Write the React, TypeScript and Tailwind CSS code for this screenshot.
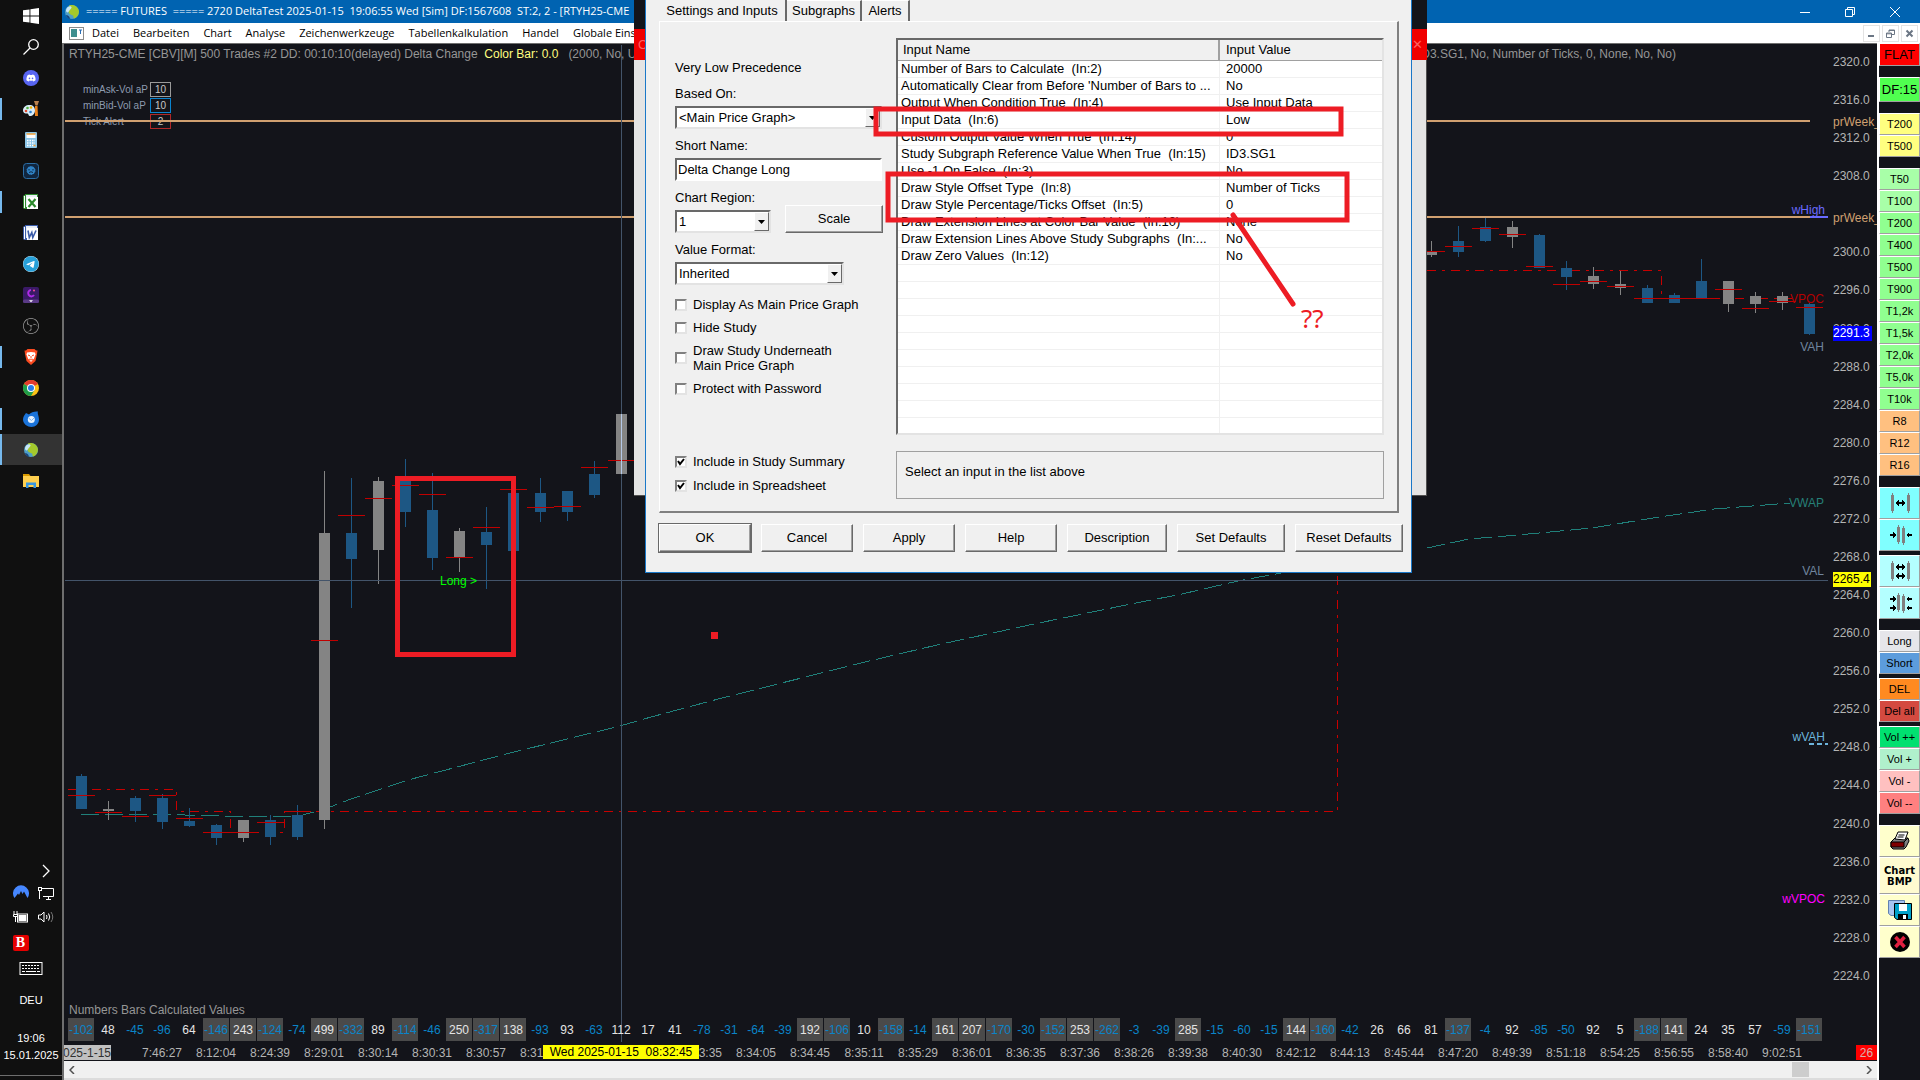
import type { ReactNode } from "react";
import { FaDiscord, FaTelegram } from "react-icons/fa6";
import { SiObsstudio } from "react-icons/si";

const BAR_STEP = 27;
const FIRST_BAR = 81;

type Candle = { i: number; up?: boolean; top: number; bottom: number; high: number; low: number; dash: number };

const CANDLES: Candle[] = [
  { i: 0, top: 776, bottom: 809, high: 774, low: 809, dash: 795 },
  { i: 1, up: true, top: 809, bottom: 811, high: 801, low: 820, dash: 812 },
  { i: 2, top: 798, bottom: 811, high: 796, low: 822, dash: 816 },
  { i: 3, top: 798, bottom: 822, high: 794, low: 829, dash: 795 },
  { i: 4, top: 821, bottom: 826, high: 808, low: 827, dash: 818 },
  { i: 5, top: 825, bottom: 838, high: 824, low: 845, dash: 832 },
  { i: 6, up: true, top: 820, bottom: 838, high: 820, low: 842, dash: 832 },
  { i: 7, top: 820, bottom: 837, high: 815, low: 845, dash: 822 },
  { i: 8, top: 815, bottom: 837, high: 805, low: 840, dash: 811 },
  { i: 9, up: true, top: 533, bottom: 820, high: 471, low: 829, dash: 640 },
  { i: 10, top: 533, bottom: 559, high: 478, low: 608, dash: 515 },
  { i: 11, up: true, top: 481, bottom: 550, high: 477, low: 584, dash: 498 },
  { i: 12, top: 480, bottom: 512, high: 459, low: 527, dash: 485 },
  { i: 13, top: 510, bottom: 558, high: 473, low: 570, dash: 494 },
  { i: 14, up: true, top: 531, bottom: 557, high: 528, low: 572, dash: 557 },
  { i: 15, top: 532, bottom: 545, high: 507, low: 589, dash: 527 },
  { i: 16, top: 493, bottom: 551, high: 493, low: 551, dash: 489 },
  { i: 17, top: 493, bottom: 512, high: 478, low: 522, dash: 507 },
  { i: 18, top: 491, bottom: 512, high: 491, low: 521, dash: 506 },
  { i: 19, top: 474, bottom: 495, high: 461, low: 498, dash: 467 },
  { i: 20, up: true, top: 414, bottom: 474, high: 414, low: 474, dash: 460 },
  { i: 50, up: true, top: 252, bottom: 255, high: 241, low: 257, dash: 251 },
  { i: 51, top: 241, bottom: 252, high: 226, low: 257, dash: 246 },
  { i: 52, top: 227, bottom: 241, high: 217, low: 242, dash: 228 },
  { i: 53, up: true, top: 227, bottom: 237, high: 221, low: 248, dash: 234 },
  { i: 54, top: 235, bottom: 268, high: 234, low: 268, dash: 266 },
  { i: 55, top: 268, bottom: 277, high: 261, low: 290, dash: 284 },
  { i: 56, up: true, top: 276, bottom: 284, high: 267, low: 289, dash: 281 },
  { i: 57, up: true, top: 284, bottom: 288, high: 271, low: 295, dash: 286 },
  { i: 58, top: 288, bottom: 303, high: 285, low: 303, dash: 298 },
  { i: 59, top: 295, bottom: 303, high: 293, low: 303, dash: 298 },
  { i: 60, top: 281, bottom: 298, high: 259, low: 298, dash: 298 },
  { i: 61, up: true, top: 281, bottom: 304, high: 281, low: 312, dash: 289 },
  { i: 62, up: true, top: 296, bottom: 304, high: 292, low: 313, dash: 308 },
  { i: 63, up: true, top: 296, bottom: 303, high: 292, low: 310, dash: 301 },
  { i: 64, top: 304, bottom: 334, high: 302, low: 335, dash: 307 },
];

const VALUES = [
  -102, 48, -45, -96, 64, -146, 243, -124, -74, 499, -332, 89, -114, -46, 250, -317, 138, -93, 93, -63, 112, 17,
  41, -78, -31, -64, -39, 192, -106, 10, -158, -14, 161, 207, -170, -30, -152, 253, -262, -3, -39, 285, -15, -60,
  -15, 144, -160, -42, 26, 66, 81, -137, -4, 92, -85, -50, 92, 5, -188, 141, 24, 35, 57, -59, -151,
];

const TIMES = [
  "7:46:27", "8:12:04", "8:24:39", "8:29:01", "8:30:14", "8:30:31", "8:30:57", "8:31:14", "", "", "8:33:35",
  "8:34:05", "8:34:45", "8:35:11", "8:35:29", "8:36:01", "8:36:35", "8:37:36", "8:38:26", "8:39:38", "8:40:30",
  "8:42:12", "8:44:13", "8:45:44", "8:47:20", "8:49:39", "8:51:18", "8:54:25", "8:56:55", "8:58:40", "9:02:51",
];

// 2304 is replaced by the prWeek line label
const PRICES = Array.from({ length: 25 }, (_, n) => 2320 - n * 4);

const MENU = ["Datei", "Bearbeiten", "Chart", "Analyse", "Zeichenwerkzeuge", "Tabellenkalkulation", "Handel", "Globale Einstellungen"];

const INPUTS: [string, string][] = [
  ["Number of Bars to Calculate  (In:2)", "20000"],
  ["Automatically Clear from Before 'Number of Bars to ...", "No"],
  ["Output When Condition True  (In:4)", "Use Input Data"],
  ["Input Data  (In:6)", "Low"],
  ["Custom Output Value When True  (In:14)", "0"],
  ["Study Subgraph Reference Value When True  (In:15)", "ID3.SG1"],
  ["Use -1 On False  (In:3)", "No"],
  ["Draw Style Offset Type  (In:8)", "Number of Ticks"],
  ["Draw Style Percentage/Ticks Offset  (In:5)", "0"],
  ["Draw Extension Lines at Color Bar Value  (In:10)", "None"],
  ["Draw Extension Lines Above Study Subgraphs  (In:...", "No"],
  ["Draw Zero Values  (In:12)", "No"],
];

/* ---------- taskbar ---------- */

function OfficeIcon({ letter, color }: { letter: string; color: string }) {
  return (
    <svg width="16" height="16" viewBox="0 0 16 16">
      <rect x="0.5" y="1.5" width="9" height="13" rx="1" fill="#fff" stroke={color} />
      <rect x="2.5" y="0.5" width="12" height="13" fill="#e9eef6" stroke={color} />
      <rect x="4" y="3" width="11" height="12" fill="#fff" />
      {letter === "X" ? (
        <path d="M5.5 5l7 8M12.5 5l-7 8" stroke={color} strokeWidth="2.2" />
      ) : (
        <path d="M5 5.5l1.3 7 2.5-5 1 5L13 5.5" stroke={color} strokeWidth="1.6" fill="none" />
      )}
    </svg>
  );
}

function GlobeIcon() {
  return (
    <svg width="16" height="16" viewBox="0 0 16 16">
      <circle cx="8" cy="8" r="7" fill="#4f9fc8" />
      <path d="M5 1.500c4.500-1.500 9.500 1 10 6 0 3-2 6-5 7-1-.5 0-2-1-3-1.500-1-4.500-1-4.500-4C4.500 5 6 4 5 1.500z" fill="#a4c92c" />
      <path d="M4 3c1.500-1 3-1 3.500 0S5.500 6 4.500 8c-1 1-2.500 0-2.500-1.500S3 3.500 4 3z" fill="#c8e6f5" />
      <path d="M2 11c2 0 3.500 1 4 4-2-.5-3.500-2-4-4z" fill="#17457e" />
    </svg>
  );
}

const TASKS: { name: string; open?: boolean; active?: boolean; icon: ReactNode }[] = [
  {
    name: "Start",
    icon: (
      <svg width="16" height="16" viewBox="0 0 16 16" fill="#fff">
        <path d="M0 2.300L6.500 1.400V7.500H0zM7.400 1.300L16 0v7.500H7.400zM0 8.400h6.500v6.200L0 13.700zM7.400 8.400H16V16l-8.600-1.200z" />
      </svg>
    ),
  },
  {
    name: "Search",
    icon: (
      <svg width="16" height="16" viewBox="0 0 16 16" fill="none" stroke="#fff" strokeWidth="1.300">
        <circle cx="10.500" cy="5.500" r="4.800" />
        <path d="M7 9L0.500 15.500" />
      </svg>
    ),
  },
  {
    name: "Discord",
    icon: (
      <span className="flex size-4 items-center justify-center rounded-full bg-[#5865f2] text-white">
        <FaDiscord size={10} />
      </span>
    ),
  },
  {
    name: "Paint",
    open: true,
    icon: (
      <svg width="16" height="16" viewBox="0 0 16 16">
        <path d="M0 9.500C0 6 3 4 6.500 4S12 6 12 9.500 9.500 15 7 15c-2 0-1-2.500-3-2.500S0 12 0 9.500z" fill="#d8ecf7" />
        <circle cx="3" cy="10" r="1.300" fill="#e04a2e" />
        <circle cx="4.500" cy="7" r="1.300" fill="#52b043" />
        <circle cx="8" cy="6.500" r="1.300" fill="#f2b200" />
        <circle cx="7.500" cy="11" r="1.300" fill="#2b7fd0" />
        <path d="M12 5h2.500l.5 10h-3z" fill="#e8801a" />
        <path d="M11 0h5l-1.500 4.500h-2z" fill="#b9814f" />
      </svg>
    ),
  },
  {
    name: "Calculator",
    icon: (
      <svg width="16" height="16" viewBox="0 0 16 16">
        <rect x="2" width="12" height="16" rx="1" fill="#8cc6e8" />
        <rect x="3.500" y="2" width="9" height="4" fill="#fff" />
        <path d="M3.500 2h9" stroke="#f2a23a" strokeWidth="1.500" />
        <path d="M4 8.500h8M4 11h8M4 13.500h8" stroke="#fff" strokeWidth="1.500" strokeDasharray="1.500 1" />
        <path d="M10.500 13.500h2" stroke="#f2a23a" strokeWidth="1.500" />
      </svg>
    ),
  },
  {
    name: "Tool",
    icon: (
      <svg width="16" height="16" viewBox="0 0 16 16">
        <rect x="0.500" y="0.500" width="15" height="15" rx="3" fill="#10263f" stroke="#2c6ea5" />
        <circle cx="8" cy="7.500" r="4" fill="#2f83c6" stroke="#2f83c6" strokeDasharray="1.500 1" />
        <path d="M6 6v1.500M10 6v1.500M6 9.500q2 -1.500 4 0" stroke="#10263f" fill="none" />
      </svg>
    ),
  },
  { name: "Excel", open: true, icon: <OfficeIcon letter="X" color="#2d8a2d" /> },
  { name: "Word", icon: <OfficeIcon letter="W" color="#3a5ba8" /> },
  {
    name: "Telegram",
    icon: (
      <span className="flex size-4 items-center justify-center rounded-full bg-white text-[#27a0d9]">
        <FaTelegram size={16} />
      </span>
    ),
  },
  {
    name: "Recorder",
    icon: (
      <svg width="16" height="16" viewBox="0 0 16 16">
        <rect width="16" height="16" rx="2" fill="#3a1a66" />
        <path d="M11 8A3.200 3.200 0 1 1 8 3" stroke="#b02be8" strokeWidth="2" fill="none" />
        <circle cx="11" cy="3.500" r="1" fill="#ff4f9a" />
        <rect y="12.500" width="16" height="3.500" rx="1.500" fill="#5a3a86" />
        <path d="M6 13.200h4l-2 2z" fill="#fff" />
      </svg>
    ),
  },
  {
    name: "OBS",
    icon: <span className="text-[#9a9a9a]"><SiObsstudio size={16} /></span>,
  },
  {
    name: "Brave",
    open: true,
    icon: (
      <svg width="16" height="16" viewBox="0 0 16 16">
        <path d="M4.500 0h7l1.500 1.500h1.500L14 5l-1.500 7L8 16l-4.500-4L2 5l-.5-3.500H3z" fill="#fb4b20" />
        <path d="M4 3.500l4-.5 4 .5.500 2-1.500 4-3 3.500-3-3.500-1.500-4z" fill="#fff" />
        <path d="M5 6l2 .8M11 6l-2 .8M8 7v2.500M6 10l2 1 2-1" stroke="#fb4b20" fill="none" />
      </svg>
    ),
  },
  {
    name: "Chrome",
    icon: (
      <svg width="16" height="16" viewBox="0 0 16 16">
        <circle cx="8" cy="8" r="8" fill="#fbc116" />
        <path d="M8 8L1.070 4A8 8 0 0 1 14.930 4z" fill="#e33b2e" />
        <path d="M8 8L1.070 4A8 8 0 0 0 8 16l3.500-6z" fill="#1f9d49" />
        <circle cx="8" cy="8" r="4" fill="#fff" />
        <circle cx="8" cy="8" r="3" fill="#2b7de9" />
      </svg>
    ),
  },
  {
    name: "Thunderbird",
    open: true,
    icon: (
      <svg width="16" height="16" viewBox="0 0 16 16">
        <path d="M3 2l3 1.500C8 1 12 0 15 .5 14 2 16 5 16 8.500 16 13 12.500 16 8.500 16S0 13 0 8.500C0 6 1.500 4 3 2z" fill="#1a73d9" />
        <circle cx="8.300" cy="8.500" r="3.500" fill="#e8f3ff" />
        <path d="M5.500 7l3 2.500L11 7" stroke="#7fb8f2" fill="none" />
      </svg>
    ),
  },
  { name: "Sierra Chart", open: true, active: true, icon: <GlobeIcon /> },
  {
    name: "Explorer",
    icon: (
      <svg width="16" height="16" viewBox="0 0 16 16">
        <path d="M0 1h6l1.500 2H0z" fill="#d99a00" />
        <path d="M0 3h16v11H0z" fill="#ffd04f" />
        <path d="M3 15V9.500h10V15h-2.500v-3h-5v3z" fill="#3796e0" />
      </svg>
    ),
  },
];

function Taskbar() {
  return (
    <aside className="flex w-[62px] shrink-0 flex-col bg-[#101010] text-[11px] text-white">
      <div className="flex flex-col">
        {TASKS.map((task) => (
          <button
            key={task.name}
            aria-label={task.name}
            className={`flex h-[31px] items-center justify-center ${task.active ? "bg-[#333333]" : ""} relative`}
          >
            {task.open && (
              <span className={`absolute left-0 w-[2px] bg-[#76b9ed] ${task.active ? "h-full" : "h-[22px]"}`} />
            )}
            {task.icon}
          </button>
        ))}
      </div>
      <div className="mt-auto flex flex-col items-center pb-1">
        <div className="grid w-full grid-cols-2 items-center justify-items-center gap-y-1 pl-2 pr-1">
          <span />
          <svg width="8" height="16" viewBox="0 0 8 16" fill="none" stroke="#fff" strokeWidth="1.300">
            <path d="M1 2l6 6-6 6" />
          </svg>
          <svg width="16" height="20" viewBox="0 0 16 16">
            <path d="M1.500 13A8 8 0 1 1 14.500 13L11 6.500 9.500 9 8 6l-2 4-1-1.500z" fill="#4687ff" />
          </svg>
          <svg width="16" height="20" viewBox="0 0 16 16" fill="none" stroke="#fff">
            <path d="M3 3.500h12.500v8H5M8 14.500h5M10.500 12v2.500M1.500 14V6" />
            <rect x="0.500" y="2.500" width="3" height="3" />
          </svg>
          <svg width="16" height="20" viewBox="0 0 16 16" fill="none" stroke="#fff">
            <path d="M1 2v3M4 2v3M.5 5.500h4v2h-4zM2.500 8v5" />
            <rect x="4.500" y="5" width="10" height="8" />
            <rect x="6" y="6.500" width="7" height="5" fill="#fff" />
          </svg>
          <svg width="16" height="20" viewBox="0 0 16 16" fill="none" stroke="#fff">
            <path d="M.5 6h2.500l3-3v10l-3-3H.5zM8.500 6q1 2 0 4M10.500 4.500q2.500 3.500 0 7" />
            <path d="M13 3q3.500 5 0 10" stroke="#777" />
          </svg>
          <span className="my-1 flex size-4 items-center justify-center rounded-[2px] bg-[#e40000] font-['Liberation_Serif',serif] text-[14px] leading-4 font-bold">
            B
          </span>
          <span />
        </div>
        <svg className="mt-[7px]" width="24" height="14" viewBox="0 0 24 14" fill="none" stroke="#fff">
          <rect x="1" y="0.500" width="22" height="12" />
          <path d="M3 3.500h18M3 6.500h18" strokeDasharray="2 1" />
          <path d="M3 9.500h3M7 9.500h10M18 9.500h3" />
        </svg>
        <span className="mt-4 leading-4">DEU</span>
        <span className="mt-[22px] leading-4">19:06</span>
        <span className="mt-px leading-4">15.01.2025</span>
        <span className="mt-3 h-px w-full bg-[#6e6e6e]" />
      </div>
    </aside>
  );
}

/* ---------- window chrome ---------- */

function TitleBar() {
  return (
    <header className="flex h-[23px] shrink-0 items-center bg-[#0063b1] pl-[2px] text-white">
      <GlobeIcon />
      <h1 className="ml-[6px] flex-1 overflow-hidden font-['Open_Sans',sans-serif] text-[11px] whitespace-pre">
        {"===== FUTURES  ===== 2720 DeltaTest 2025-01-15  19:06:55 Wed [Sim] DF:1567608  ST:2, 2 - [RTYH25-CME"}
      </h1>
      <div className="flex">
        <button aria-label="Minimize" className="flex h-[23px] w-[45px] items-center justify-center">
          <svg width="10" height="10" stroke="#fff"><path d="M0 5.500h10" /></svg>
        </button>
        <button aria-label="Restore" className="flex h-[23px] w-[45px] items-center justify-center">
          <svg width="10" height="10" stroke="#fff" fill="none"><path d="M.5 2.500h7v7h-7zM2.500 2V.5h7v7H8" /></svg>
        </button>
        <button aria-label="Close" className="mr-[3px] flex h-[23px] w-[45px] items-center justify-center">
          <svg width="10" height="10" stroke="#fff"><path d="M0 0l10 10M10 0L0 10" /></svg>
        </button>
      </div>
    </header>
  );
}

function MenuBar() {
  return (
    <nav className="flex h-5 shrink-0 items-center bg-white pl-[7px] text-black">
      <svg width="15" height="13" viewBox="0 0 15 13">
        <rect x="0.500" y="0.500" width="14" height="12" fill="#fff" stroke="#8a8a8a" />
        <rect x="2" y="2" width="6" height="8" fill="#3f8f8f" />
        <path d="M10 3h3M11.500 3v4" stroke="#2b6fb5" />
      </svg>
      <div className="ml-2 flex flex-1 gap-[14px] font-['Open_Sans',sans-serif] text-[11px]">
        {MENU.map((m) => (
          <button key={m} className="whitespace-nowrap">{m}</button>
        ))}
      </div>
      <div className="flex gap-[2px] pr-[2px]">
        <button aria-label="Minimize chart" className="flex size-[17px] items-center justify-center border border-[#e3e3e3]">
          <svg width="9" height="9" stroke="#6b7684" strokeWidth="2"><path d="M1 7h6" /></svg>
        </button>
        <button aria-label="Restore chart" className="flex size-[17px] items-center justify-center border border-[#e3e3e3]">
          <svg width="9" height="9" stroke="#6b7684" fill="none"><path d="M.5 4h5v4.500h-5zM.5 4.800h5M3 3V1h5.500v4.500H6M3 1.500h5" /></svg>
        </button>
        <button aria-label="Close chart" className="flex size-[17px] items-center justify-center border border-[#e3e3e3]">
          <svg width="9" height="9" stroke="#6b7684" strokeWidth="2"><path d="M1.500 1.500l6 6M7.500 1.500l-6 6" /></svg>
        </button>
      </div>
    </nav>
  );
}

/* ---------- chart ---------- */

function ChartCanvas() {
  return (
    <svg className="absolute inset-0 h-full w-full text-[12px]" shapeRendering="crispEdges">
      <g transform="translate(-64 -44)" fill="none">
        <path d="M68 789.500H176.500V811.500H230.500V832.500H284.500V811.500H1337.500V560" stroke="#c80000" strokeDasharray="9 6 3 6" />
        <path d="M1427 270.500H1661.500V298.500H1795" stroke="#c80000" strokeDasharray="9 6 3 6" />
        <path
          d="M81 814.500H164L205 815.500 240 816.500H297L314 812 330 807 351 799 408 780 506 754 620 726 651 717 722 698 865 662 937 645 1034 624 1131 604 1182 594 1238 581 1281 573M1427 548L1469 539 1518 535 1592 528 1653 518 1714 509 1790 503"
          stroke="#20807a"
          strokeDasharray="18 6"
        />
        {CANDLES.map((c) => {
          const x = FIRST_BAR + c.i * BAR_STEP;
          const color = c.up ? "#848484" : "#1d5784";
          return (
            <g key={c.i}>
              <path d={`M${x + 0.5} ${c.high}V${c.low}`} stroke={color} />
              <rect x={x - 5} y={c.top} width="11" height={c.bottom - c.top} fill={color} />
              <path d={`M${x - 13} ${c.dash + 0.5}h27`} stroke="#c00000" />
            </g>
          );
        })}
        <path d="M65 121H1810M65 217H1810" stroke="#d0a070" strokeWidth="2" />
        <path d="M1810 217h18" stroke="#6a6aff" strokeWidth="2" />
        <path d="M1809 744h19" stroke="#6cb4dc" strokeWidth="2" strokeDasharray="5 3" />
        <path d="M65 580.500H1828M621.500 45V1042" stroke="#43546a" />
        <path d="M621.500 414V474" stroke="#b4c8e8" />
        <text x="440" y="585" fill="#00ff00">Long &gt;</text>
        <g textAnchor="end">
          <text x="1825" y="214" fill="#6a6aff">wHigh</text>
          <text x="1824" y="303" fill="#b40000">VPOC</text>
          <text x="1824" y="351" fill="#70859e">VAH</text>
          <text x="1824" y="507" fill="#268078">VWAP</text>
          <text x="1824" y="575" fill="#70859e">VAL</text>
          <text x="1825" y="741" fill="#6cb4dc">wVAH</text>
          <text x="1825" y="903" fill="#ff00ff">wVPOC</text>
        </g>
        {/* user drawings */}
        <rect x="397.500" y="478.500" width="116" height="176" stroke="#ed1c24" strokeWidth="5" />
        <rect x="711" y="632" width="7" height="7" fill="#ed1c24" />
      </g>
    </svg>
  );
}

function ChartControl({ label, value, tone }: { label: string; value: string; tone: string }) {
  return (
    <label className="flex h-4 items-center">
      <span className="w-[67px]">{label}</span>
      <input readOnly value={value} className={`h-[15px] w-[21px] border bg-transparent text-center text-[#c8c8c8] ${tone}`} />
    </label>
  );
}

function Chart() {
  return (
    <section className="relative flex min-w-0 flex-1 flex-col overflow-hidden border-t border-l-2 border-[#6e6e6e] bg-[#13141a] text-[12px] text-[#b4b4b4]">
      <div className="absolute top-[37px] left-[19px] text-[10px] text-[#8d9bb0]">
        <ChartControl label="minAsk-Vol aP" value="10" tone="border-[#9a9a9a]" />
        <ChartControl label="minBid-Vol aP" value="10" tone="border-[#0a84d0]" />
        <ChartControl label="Tick Alert" value="2" tone="border-[#b02828]" />
      </div>
      <ChartCanvas />
      <div className="relative flex min-h-0 flex-1">
        <div className="flex min-w-0 flex-1 flex-col justify-between">
          <div className="flex justify-between pt-[2px] pr-[157px] pl-[5px] leading-4 whitespace-pre text-[#969696]">
            <p>
              RTYH25-CME [CBV][M] 500 Trades #2 DD: 00:10:10(delayed) Delta Change{"  "}
              <span className="text-[#ffff80]">Color Bar: 0.0</span>
              {"   (2000, No, Use"}
            </p>
            <p>ID3.SG1, No, Number of Ticks, 0, None, No, No)</p>
          </div>
          <p className="pl-[5px] leading-4 text-[#969696]">Numbers Bars Calculated Values</p>
        </div>
        <div className="relative flex w-11 flex-col justify-between overflow-hidden pt-2 pb-8">
          {PRICES.map((p) => (
            <span key={p} className={`leading-5 ${p === 2304 ? "invisible" : ""}`}>{p.toFixed(1)}</span>
          ))}
          <span className="absolute top-[70px] left-0 leading-4 text-[#d0a070]">prWeek_</span>
          <span className="absolute top-[166px] left-0 leading-4 text-[#d0a070]">prWeek_</span>
          <span className="absolute top-[282px] left-0 bg-[#0000ff] pr-[2px] leading-[15px] text-white">2291.3</span>
          <span className="absolute top-[528px] left-0 bg-[#ffff00] pr-px leading-[15px] text-black">2265.4</span>
        </div>
      </div>
      <div className="relative flex h-[23px] shrink-0 gap-px pl-1 text-center leading-[25px]">
        {VALUES.map((v, n) => (
          <span
            key={n}
            className={`flex w-[26px] shrink-0 justify-center ${v <= -100 || v >= 120 ? "bg-[#4a4a4a]" : ""} ${v < 0 ? "text-[#0a84c8]" : "text-[#e4e4e4]"}`}
          >
            {v}
          </span>
        ))}
      </div>
      <div className="relative mt-1 flex h-4 shrink-0 text-center leading-4">
        <span className="flex h-[15px] w-[47px] shrink-0 justify-end overflow-hidden bg-[#c0c0c0] whitespace-nowrap text-[#303030]">2025-1-15</span>
        <div className="ml-6 flex">
          {TIMES.map((t, n) => (
            <span key={n} className="w-[54px] shrink-0">{t}</span>
          ))}
        </div>
        <span className="ml-auto h-[15px] w-[21px] bg-[#ff0000] text-[#d8b0b0]">26</span>
        <span className="absolute top-0 left-[479px] h-[14px] w-[156px] bg-[#ffff00] leading-[15px] whitespace-pre text-black">
          {"Wed 2025-01-15  08:32:45"}
        </span>
      </div>
      <div className="relative flex h-[19px] shrink-0 items-center justify-between border-b-2 border-[#dcdcdc] bg-[#f0f0f0] px-[5px]">
        <svg width="6" height="8" fill="none" stroke="#505050" strokeWidth="1.500"><path d="M5 0L1 4l4 4" /></svg>
        <span className="mr-[57px] ml-auto h-[15px] w-[17px] bg-[#cdcdcd]" />
        <svg width="6" height="8" fill="none" stroke="#505050" strokeWidth="1.500"><path d="M1 0l4 4-4 4" /></svg>
      </div>
    </section>
  );
}

/* ---------- trading toolbar ---------- */

function ToolButton({ children, tone, size = "h-[22px] text-[11px]" }: { children?: ReactNode; tone: string; size?: string }) {
  return (
    <button
      className={`flex w-full shrink-0 items-center justify-center overflow-hidden border border-t-white border-r-[#a0a0a0] border-b-[#a0a0a0] border-l-white whitespace-nowrap text-black ${size} ${tone}`}
    >
      {children}
    </button>
  );
}

function SpacingIcon({ wide, double }: { wide?: boolean; double?: boolean }) {
  const rows = double ? [6, 15] : [10];
  return (
    <svg width="24" height="20" viewBox="0 0 24 20" shapeRendering="crispEdges">
      <g fill="#808080">
        {wide ? (
          <path d="M3 2h3v16H3zM4 0h1v20H4zM19 2h3v16h-3zM20 0h1v20h-1z" />
        ) : (
          <path d="M9 2h3v15H9zM10 0h1v19h-1zM14 3h3v15h-3zM15 1h1v19h-1z" />
        )}
      </g>
      {rows.map((y) =>
        wide ? (
          <path key={y} d={`M7 ${y}l4-3v2h3v-2l4 3-4 3v-2h-3v2z`} fill="#000" />
        ) : (
          <path key={y} d={`M2 ${y - 1}h3v-2l3 3-3 3v-2H2zM24 ${y - 1}h-3v-2l-3 3 3 3v-2h3z`} fill="#000" />
        )
      )}
    </svg>
  );
}

function Toolbar() {
  return (
    <aside className="flex w-[43px] shrink-0 flex-col border-l-2 border-white bg-[#13141a]">
      <ToolButton tone="bg-[#ff0000]" size="h-[23px] text-[13px]">FLAT</ToolButton>
      <div className="h-[11px] shrink-0" />
      <ToolButton tone="bg-[#50ff50]" size="h-[25px] text-[13px]">DF:15</ToolButton>
      <div className="h-[11px] shrink-0" />
      <ToolButton tone="bg-[#ffff80]">T200</ToolButton>
      <ToolButton tone="bg-[#ffff80]">T500</ToolButton>
      <div className="h-[11px] shrink-0" />
      <ToolButton tone="bg-[#a8ffa8]">T50</ToolButton>
      <ToolButton tone="bg-[#a8ffa8]">T100</ToolButton>
      {["T200", "T400", "T500", "T900", "T1,2k", "T1,5k", "T2,0k", "T5,0k", "T10k"].map((t) => (
        <ToolButton key={t} tone="bg-[#90ff90]">{t}</ToolButton>
      ))}
      {["R8", "R12", "R16"].map((t) => (
        <ToolButton key={t} tone="bg-[#ffc080]">{t}</ToolButton>
      ))}
      <div className="h-[11px] shrink-0" />
      <ToolButton tone="bg-[#80ffff]" size="h-8"><SpacingIcon wide /></ToolButton>
      <ToolButton tone="bg-[#80ffff]" size="h-8"><SpacingIcon /></ToolButton>
      <div className="h-1 shrink-0" />
      <ToolButton tone="bg-[#b4ffff]" size="h-8"><SpacingIcon wide double /></ToolButton>
      <ToolButton tone="bg-[#b4ffff]" size="h-8"><SpacingIcon double /></ToolButton>
      <div className="h-[11px] shrink-0" />
      <ToolButton tone="bg-[#e6e6ea]">Long</ToolButton>
      <ToolButton tone="bg-[#5c9cdc]">Short</ToolButton>
      <div className="h-1 shrink-0" />
      <ToolButton tone="bg-[#ff8a20]">DEL</ToolButton>
      <ToolButton tone="bg-[#d44a40]">Del all</ToolButton>
      <div className="h-1 shrink-0" />
      <ToolButton tone="bg-[#00e070]">Vol ++</ToolButton>
      <ToolButton tone="bg-[#b0f0cc]">Vol +</ToolButton>
      <ToolButton tone="bg-[#ffc0c0]">Vol -</ToolButton>
      <ToolButton tone="bg-[#ff8080]">Vol --</ToolButton>
      <div className="h-[11px] shrink-0" />
      <ToolButton tone="bg-[#ffffcc]" size="h-8">
        <svg width="20" height="20" viewBox="0 0 20 20" stroke="#000">
          <path d="M1 11l4-4h13l1 3-3 6-2 2H3l-2-2z" fill="#808080" />
          <path d="M5 8l3-7h10l-3 8z" fill="#fff" />
          <path d="M1 11h13v5H1z" fill="#800000" />
          <path d="M8.500 4h6M7.500 6h6M14 11l4-4" />
        </svg>
      </ToolButton>
      <ToolButton tone="bg-[#fffbd0]" size="h-[37px]">
        <span className="text-center font-['DejaVu_Sans',sans-serif] text-[10px] leading-[11px] font-bold">Chart<br />BMP</span>
      </ToolButton>
      <ToolButton tone="bg-[#ffffcc]" size="h-8">
        <svg width="24" height="20" viewBox="0 0 24 20">
          <path d="M.5.5h16v15H3l-2.500-2z" fill="#a8c4f0" stroke="#6080b0" />
          <path d="M6.500 3.500h17v16H9l-2.500-2z" fill="#00a0c8" stroke="#000" />
          <path d="M11 4h8v7h-8z" fill="#fff" />
          <path d="M10 14h10v6H10z" fill="#000" />
          <path d="M15 15h3v4h-3z" fill="#fff" />
        </svg>
      </ToolButton>
      <ToolButton tone="bg-[#ffffcc]" size="h-8">
        <svg width="20" height="20" viewBox="0 0 20 20">
          <circle cx="10" cy="10" r="10" fill="#000" />
          <path d="M5.500 5l9 10M14.500 5l-9 10" stroke="#e02040" strokeWidth="3.500" />
        </svg>
      </ToolButton>
    </aside>
  );
}

/* ---------- study settings dialog ---------- */

function DropDown({ id, value, width }: { id: string; value: string; width: string }) {
  return (
    <div className={`relative mt-1 h-[23px] ${width}`}>
      <select
        id={id}
        defaultValue={value}
        className="h-full w-full appearance-none border-2 border-t-[#696969] border-r-[#e3e3e3] border-b-[#e3e3e3] border-l-[#696969] bg-white pl-[2px] leading-4"
      >
        <option>{value}</option>
      </select>
      <span className="pointer-events-none absolute top-[2px] right-[2px] flex h-[19px] w-[15px] items-center justify-center border border-t-white border-r-[#696969] border-b-[#696969] border-l-white bg-[#f0f0f0]">
        <svg width="7" height="4"><path d="M0 0h7L3.500 4z" fill="#000" /></svg>
      </span>
    </div>
  );
}

function CheckBox({ children, checked }: { children: ReactNode; checked?: boolean }) {
  return (
    <label className="flex items-center gap-[6px]">
      <span className="relative flex h-3 w-3 shrink-0">
        <input
          type="checkbox"
          defaultChecked={checked}
          className="peer h-3 w-3 appearance-none border-2 border-t-[#808080] border-r-[#e3e3e3] border-b-[#e3e3e3] border-l-[#808080] bg-white"
        />
        <svg className="pointer-events-none absolute top-[2px] left-[2px] hidden peer-checked:block" width="8" height="8" fill="none" stroke="#000" strokeWidth="2">
          <path d="M1 3l2 3 4-5" />
        </svg>
      </span>
      <span className="leading-[15px]">{children}</span>
    </label>
  );
}

function PushButton({ children, size }: { children: ReactNode; size: string }) {
  return (
    <button className={`h-7 shrink-0 border border-t-white border-r-[#696969] border-b-[#696969] border-l-white shadow-[inset_-1px_-1px_0_#a0a0a0] ${size}`}>
      {children}
    </button>
  );
}

function StudyDialog() {
  return (
    <div role="dialog" className="absolute top-0 left-[645px] w-[767px] border-x border-b border-[#1a78c8] bg-[#f0f0f0] pb-5 pl-[13px] text-[13px] text-black">
      <div role="tablist" className="flex h-[21px]">
        <button role="tab" className="w-[128px] border-r-2 border-[#696969] text-center leading-4">Settings and Inputs</button>
        <button role="tab" className="w-[75px] border-t border-r-2 border-t-white border-r-[#696969] leading-4">Subgraphs</button>
        <button role="tab" className="w-12 border-t border-r-2 border-t-white border-r-[#696969] leading-4">Alerts</button>
      </div>
      <div className="flex h-[492px] w-[740px] border-t border-r-2 border-b-2 border-l border-t-white border-r-[#808080] border-b-[#808080] border-l-white pl-[15px]">
        <div className="w-[208px] pt-[38px]">
          <p className="leading-4">Very Low Precedence</p>
          <label htmlFor="based" className="mt-[10px] block leading-4">Based On:</label>
          <DropDown id="based" value="<Main Price Graph>" width="w-[207px]" />
          <label htmlFor="short" className="mt-[9px] block leading-4">Short Name:</label>
          <input
            id="short"
            defaultValue="Delta Change Long"
            className="mt-1 block h-[23px] w-[207px] border-2 border-t-[#696969] border-r-white border-b-white border-l-[#696969] bg-white pl-px"
          />
          <div className="mt-[9px] flex items-end justify-between">
            <div>
              <label htmlFor="region" className="block leading-4">Chart Region:</label>
              <DropDown id="region" value="1" width="w-24" />
            </div>
            <PushButton size="w-[98px]">Scale</PushButton>
          </div>
          <label htmlFor="format" className="mt-[9px] block leading-4">Value Format:</label>
          <DropDown id="format" value="Inherited" width="w-[169px]" />
          <div className="mt-3 flex flex-col gap-2">
            <CheckBox>Display As Main Price Graph</CheckBox>
            <CheckBox>Hide Study</CheckBox>
            <CheckBox>Draw Study Underneath<br />Main Price Graph</CheckBox>
            <CheckBox>Protect with Password</CheckBox>
          </div>
          <div className="mt-[58px] flex flex-col gap-[9px]">
            <CheckBox checked>Include in Study Summary</CheckBox>
            <CheckBox checked>Include in Spreadsheet</CheckBox>
          </div>
        </div>
        <div className="ml-[13px] w-[488px] pt-4">
          <div className="h-[397px] overflow-hidden border-2 border-t-[#696969] border-r-[#e3e3e3] border-b-[#e3e3e3] border-l-[#696969] bg-white">
            <table className="w-full table-fixed border-separate border-spacing-0 text-left whitespace-pre">
              <thead>
                <tr className="h-[21px] bg-[#f0f0f0]">
                  <th className="w-[322px] border-r-2 border-b border-[#a0a0a0] pl-[5px] leading-4 font-normal">Input Name</th>
                  <th className="border-b border-[#a0a0a0] pl-[6px] leading-4 font-normal">Input Value</th>
                </tr>
              </thead>
              <tbody>
                {INPUTS.map(([name, value]) => (
                  <tr key={name} className="h-[17px]">
                    <td className="overflow-hidden border-r border-b border-[#f0f0f0] pl-[3px] leading-4">{name}</td>
                    <td className="border-b border-[#f0f0f0] pl-[6px] leading-4">{value}</td>
                  </tr>
                ))}
                {Array.from({ length: 10 }, (_, n) => (
                  <tr key={n} className="h-[17px]">
                    <td className="border-r border-b border-[#f0f0f0]" />
                    <td className="border-b border-[#f0f0f0]" />
                  </tr>
                ))}
              </tbody>
            </table>
          </div>
          <div className="mt-4 h-12 border border-[#a0a0a0] px-2 pt-3 leading-4">Select an input in the list above</div>
        </div>
      </div>
      <div className="mt-[11px] flex gap-[10px]">
        <PushButton size="w-[92px] outline outline-[#696969]">OK</PushButton>
        <PushButton size="w-[92px]">Cancel</PushButton>
        <PushButton size="w-[92px]">Apply</PushButton>
        <PushButton size="w-[92px]">Help</PushButton>
        <PushButton size="w-[100px]">Description</PushButton>
        <PushButton size="w-[108px]">Set Defaults</PushButton>
        <PushButton size="w-[108px]">Reset Defaults</PushButton>
      </div>
    </div>
  );
}

function Markup() {
  return (
    <svg className="pointer-events-none absolute top-[100px] left-[870px]" width="490" height="240" fill="none" stroke="#ed1c24" strokeWidth="5">
      <rect x="6" y="9" width="465" height="25" />
      <rect x="18" y="74" width="459" height="46" />
      <path d="M363 115L423 204" strokeLinecap="round" />
      <text x="431" y="228" fill="#ed1c24" stroke="none" className="font-['Noto_Sans',sans-serif] text-[26px]">??</text>
    </svg>
  );
}

export default function App() {
  return (
    <div className="relative flex h-screen w-full overflow-hidden bg-[#101010] font-['Liberation_Sans',Arial,sans-serif]">
      <Taskbar />
      <main className="flex min-w-0 flex-1 flex-col">
        <TitleBar />
        <MenuBar />
        <div className="flex min-h-0 flex-1">
          <Chart />
          <Toolbar />
        </div>
      </main>
      {/* parent window peeking out behind the dialog */}
      <div className="absolute top-0 left-[634px] w-[793px] bg-[#13141a]">
        <div className="mt-[29px] flex h-[31px] items-center justify-between bg-[#f00000] text-[13px] text-[#ff6060]">
          <span className="pl-1">C</span>
          <span className="pr-1">✕</span>
        </div>
        <div className="h-[436px] border-r border-b border-[#505050] bg-[#e4e4e4]" />
      </div>
      <StudyDialog />
      <Markup />
    </div>
  );
}
